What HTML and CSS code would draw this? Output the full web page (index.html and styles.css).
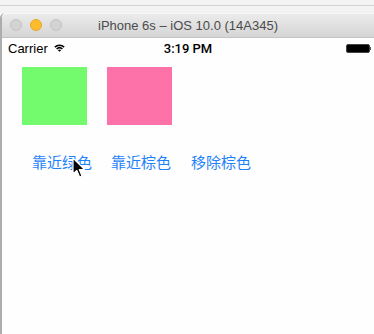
FILE: index.html
```html
<!DOCTYPE html>
<html>
<head>
<meta charset="utf-8">
<link rel="stylesheet" href="styles.css">
</head>
<body>
<div class="desk"><div class="desk-line"></div></div>
<div class="window">
  <div class="titlebar">
    <div class="lights">
      <span class="light light-gray"></span>
      <span class="light light-orange"></span>
      <span class="light light-gray"></span>
    </div>
    <div class="title">iPhone 6s – iOS 10.0 (14A345)</div>
  </div>
  <div class="screen">
    <div class="statusbar">
      <div class="carrier">Carrier
        <svg class="wifi" width="11" height="8" viewBox="0 0 11 8">
          <path d="M0.3 2.6 A7.5 7.5 0 0 1 10.7 2.6 L9.6 3.7 A6 6 0 0 0 1.4 3.7 Z" fill="#000"/>
          <path d="M2.1 4.4 A5 5 0 0 1 8.9 4.4 L7.8 5.5 A3.5 3.5 0 0 0 3.2 5.5 Z" fill="#000"/>
          <path d="M3.9 6.2 A2.3 2.3 0 0 1 7.1 6.2 L5.5 7.8 Z" fill="#000"/>
        </svg>
      </div>
      <div class="time">3:19 PM</div>
      <div class="battery"><span class="battery-body"></span><span class="battery-tip"></span></div>
    </div>
    <div class="boxes">
      <div class="box box-green"></div>
      <div class="box box-pink"></div>
    </div>
    <div class="buttons">
      <span class="btn">靠近绿色</span>
      <span class="btn btn-mid">靠近棕色</span>
      <span class="btn">移除棕色</span>
    </div>
  </div>
</div>
<svg class="cursor" width="14" height="22" viewBox="0 0 14 22">
  <path d="M1 1 L1 17 L4.8 13.4 L7.6 20 L10 19 L7.3 12.6 L12.5 12.6 Z" fill="#000" stroke="#fff" stroke-width="1.2" stroke-linejoin="round"/>
</svg>
</body>
</html>
```
FILE: styles.css
```css
html, body {
  margin: 0;
  padding: 0;
  background: #fefefe;
  overflow: hidden;
}
body {
  width: 374px;
  height: 334px;
  position: relative;
  font-family: "Liberation Sans", Arial, sans-serif;
}
.desk {
  height: 13px;
  background: #f3f3f3;
  box-sizing: border-box;
  padding-top: 5px;
}
.desk-line {
  height: 1px;
  background: #d2d2d2;
}
.window {
  border-left: 2px solid #adadad;
  border-top-left-radius: 5px;
  height: 321px;
  box-sizing: border-box;
  display: flex;
  flex-direction: column;
  background: #fefefe;
}
.titlebar {
  height: 25px;
  box-sizing: border-box;
  background: linear-gradient(#ebebeb, #d5d5d5);
  border-top: 1px solid #f7f7f7;
  border-bottom: 1px solid #c3c3c3;
  border-top-left-radius: 5px;
  position: relative;
  display: flex;
  align-items: center;
  justify-content: center;
}
.lights {
  position: absolute;
  left: 8px;
  top: 5px;
  display: flex;
  gap: 8px;
}
.light {
  width: 12px;
  height: 12px;
  border-radius: 50%;
  box-sizing: border-box;
}
.light-gray {
  background: #d3d3d3;
  border: 1px solid #c3c3c3;
}
.light-orange {
  background: #fdbc2e;
  border: 1px solid #e5a72a;
}
.title {
  font-size: 13px;
  color: #4b4b4b;
}
.screen {
  flex: 1;
  display: flex;
  flex-direction: column;
}
.statusbar {
  height: 20px;
  display: flex;
  align-items: center;
  justify-content: space-between;
  padding: 0 3px 0 6px;
  position: relative;
  font-size: 13px;
  color: #000;
}
.carrier {
  display: flex;
  align-items: center;
  gap: 6px;
}
.time {
  position: absolute;
  left: 0;
  right: 0;
  text-align: center;
  font-family: Roboto, "Liberation Sans", sans-serif;
  font-weight: 500;
  font-size: 13px;
  pointer-events: none;
}
.battery {
  display: flex;
  align-items: center;
}
.battery-body {
  width: 22px;
  height: 7px;
  background: #000;
  border: 1px solid #444;
  border-radius: 2px;
}
.battery-tip {
  width: 1.5px;
  height: 3px;
  background: #555;
}
.boxes {
  display: flex;
  gap: 20px;
  margin: 9px 0 0 20px;
}
.box {
  width: 65px;
  height: 58px;
}
.box-green {
  background: #73fb6d;
}
.box-pink {
  background: #fe72aa;
}
.buttons {
  display: flex;
  gap: 20px;
  margin: 27px 0 0 30px;
}
.btn {
  font-family: "Noto Sans CJK SC", sans-serif;
  font-size: 15px;
  line-height: 20px;
  color: #1e83fb;
}
.btn-mid {
  margin-left: -1px;
}
.cursor {
  position: absolute;
  left: 72px;
  top: 157px;
}
```
